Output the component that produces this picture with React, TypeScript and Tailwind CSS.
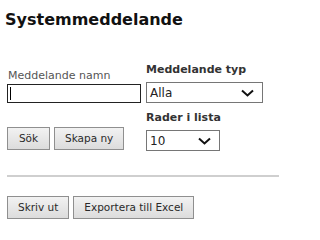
import React from "react";

function Chevron() {
  return (
    <svg width="13" height="8" viewBox="0 0 13 8" className="shrink-0">
      <path d="M1 1.5 L6.5 6.5 L12 1.5" fill="none" stroke="#111" strokeWidth="2" />
    </svg>
  );
}

function Select({ value, width }: { value: string; width: string }) {
  return (
    <div className={`flex items-center justify-between h-[21px] border border-[#767676] bg-white pl-[3px] pr-[8px] ${width}`}>
      <span className="text-[12px] text-[#222]">{value}</span>
      <Chevron />
    </div>
  );
}

function Btn({ label, className = "" }: { label: string; className?: string }) {
  return (
    <button className={`h-[23px] px-[10px] border border-[#8f8f8f] bg-gradient-to-b from-[#f2f2f2] to-[#dcdcdc] text-[10.5px] text-[#2a2a2a] leading-none ${className}`}>
      {label}
    </button>
  );
}

export default function App() {
  return (
    <div className="w-[279px] h-[229px] bg-white overflow-hidden font-['DejaVu_Sans',Verdana,sans-serif]">
      <h1 className="pl-[5px] pt-[10px] text-[16px] font-bold text-[#111] leading-[20px]">
        Systemmeddelande
      </h1>
      <div className="flex pl-[7px] pt-[33px]">
        <div className="w-[139px] flex flex-col">
          <label className="pt-[6px] pl-[1px] text-[11px] text-[#555] leading-[14px]">Meddelande namn</label>
          <div className="mt-[1px] w-[134px] h-[19px] border border-[#222] bg-white flex items-center pl-[2px]">
            <div className="w-px h-[13px] bg-black" />
          </div>
          <div className="flex gap-[4px] mt-[24px]">
            <Btn label="Sök" className="w-[43px]" />
            <Btn label="Skapa ny" />
          </div>
        </div>
        <div className="flex flex-col">
          <label className="text-[11px] font-bold text-[#333] leading-[14px]">Meddelande typ</label>
          <div className="mt-[5px]">
            <Select value="Alla" width="w-[117px]" />
          </div>
          <label className="mt-[8px] text-[11px] font-bold text-[#333] leading-[14px]">Rader i lista</label>
          <div className="mt-[5px]">
            <Select value="10" width="w-[74px]" />
          </div>
        </div>
      </div>
      <div className="ml-[7px] mt-[24px] h-[2px] bg-[#cfcfcf]" />
      <div className="flex gap-[4px] pl-[7px] mt-[19px]">
        <Btn label="Skriv ut" />
        <Btn label="Exportera till Excel" />
      </div>
    </div>
  );
}
